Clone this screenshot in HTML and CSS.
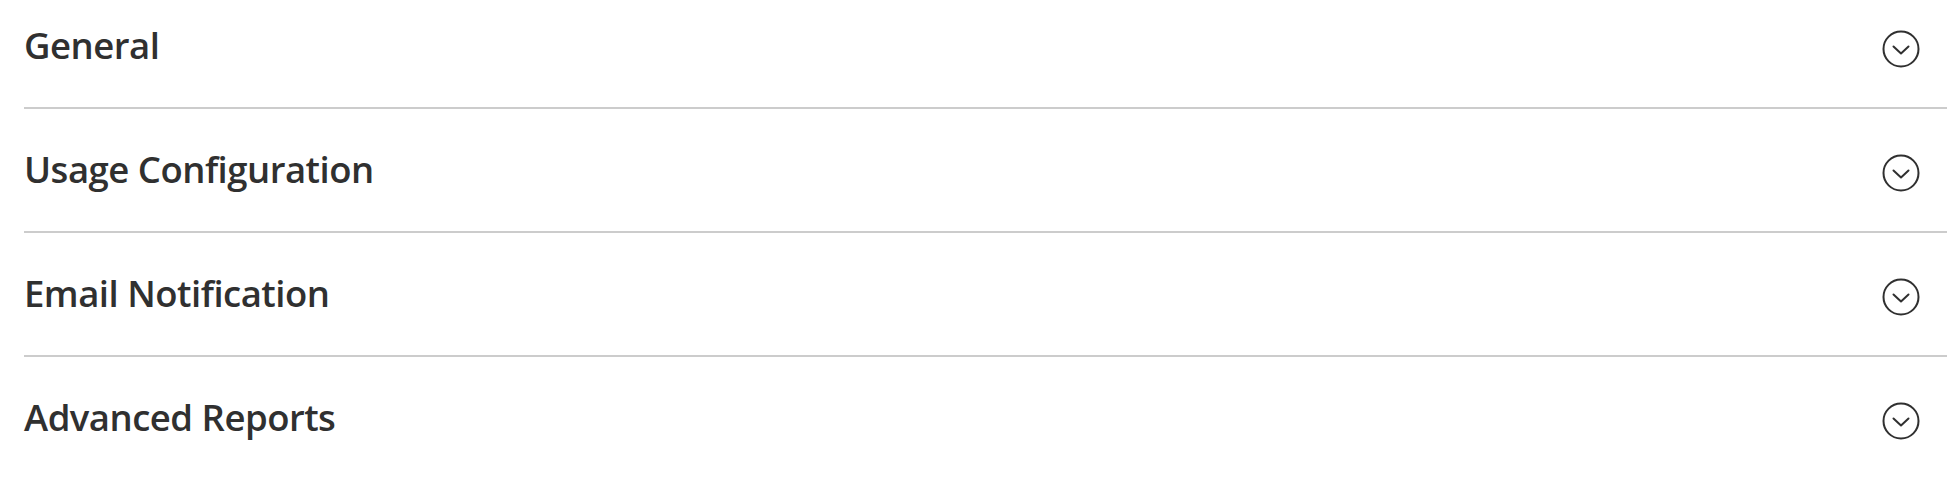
FILE: index.html
```html
<!DOCTYPE html>
<html lang="en">
<head>
<meta charset="UTF-8">
<title>Configuration</title>
<link rel="stylesheet" href="styles.css">
</head>
<body>

<main class="config">

  <section class="block">
    <div class="block-head">
      <h2 class="block-title">General</h2>
      <svg class="toggle" viewBox="0 0 38 38" aria-hidden="true"><circle cx="19" cy="19" r="17.5"/><path d="M11.5 16.5l7.5 7 7.5-7"/></svg>
    </div>
  </section>

  <section class="block">
    <div class="block-head">
      <h2 class="block-title">Usage Configuration</h2>
      <svg class="toggle" viewBox="0 0 38 38" aria-hidden="true"><circle cx="19" cy="19" r="17.5"/><path d="M11.5 16.5l7.5 7 7.5-7"/></svg>
    </div>
  </section>

  <section class="block">
    <div class="block-head">
      <h2 class="block-title">Email Notification</h2>
      <svg class="toggle" viewBox="0 0 38 38" aria-hidden="true"><circle cx="19" cy="19" r="17.5"/><path d="M11.5 16.5l7.5 7 7.5-7"/></svg>
    </div>
  </section>

  <section class="block">
    <div class="block-head">
      <h2 class="block-title">Advanced Reports</h2>
      <svg class="toggle" viewBox="0 0 38 38" aria-hidden="true"><circle cx="19" cy="19" r="17.5"/><path d="M11.5 16.5l7.5 7 7.5-7"/></svg>
    </div>
  </section>

</main>

</body>
</html>
```

FILE: styles.css
```css
:root {
  --ink: #303030;
  --rule: #cccccc;
}
* { margin: 0; padding: 0; box-sizing: border-box; }
body {
  background: #ffffff;
  color: var(--ink);
  font-family: "Open Sans", "Liberation Sans", sans-serif;
}

/* ---------- collapsible blocks ---------- */
.config {
  padding: 0 5px 0 24px;
}
.block {
  border-bottom: 2px solid var(--rule);
}
.block:last-child { border-bottom: none; }
.block-head {
  display: flex;
  align-items: center;
  justify-content: space-between;
  height: 122px;
  padding-right: 27px;
}
.block:first-child .block-head { height: 107px; padding-bottom: 15px; }
.block-title {
  font-size: 36.5px;
  font-weight: 600;
  line-height: 1.36;
  letter-spacing: -0.5px;
}
.toggle {
  width: 38px;
  height: 38px;
  margin-top: 5px;
  fill: none;
  stroke: var(--ink);
  stroke-width: 2;
}
.toggle path { stroke-linecap: round; stroke-linejoin: round; }
```
